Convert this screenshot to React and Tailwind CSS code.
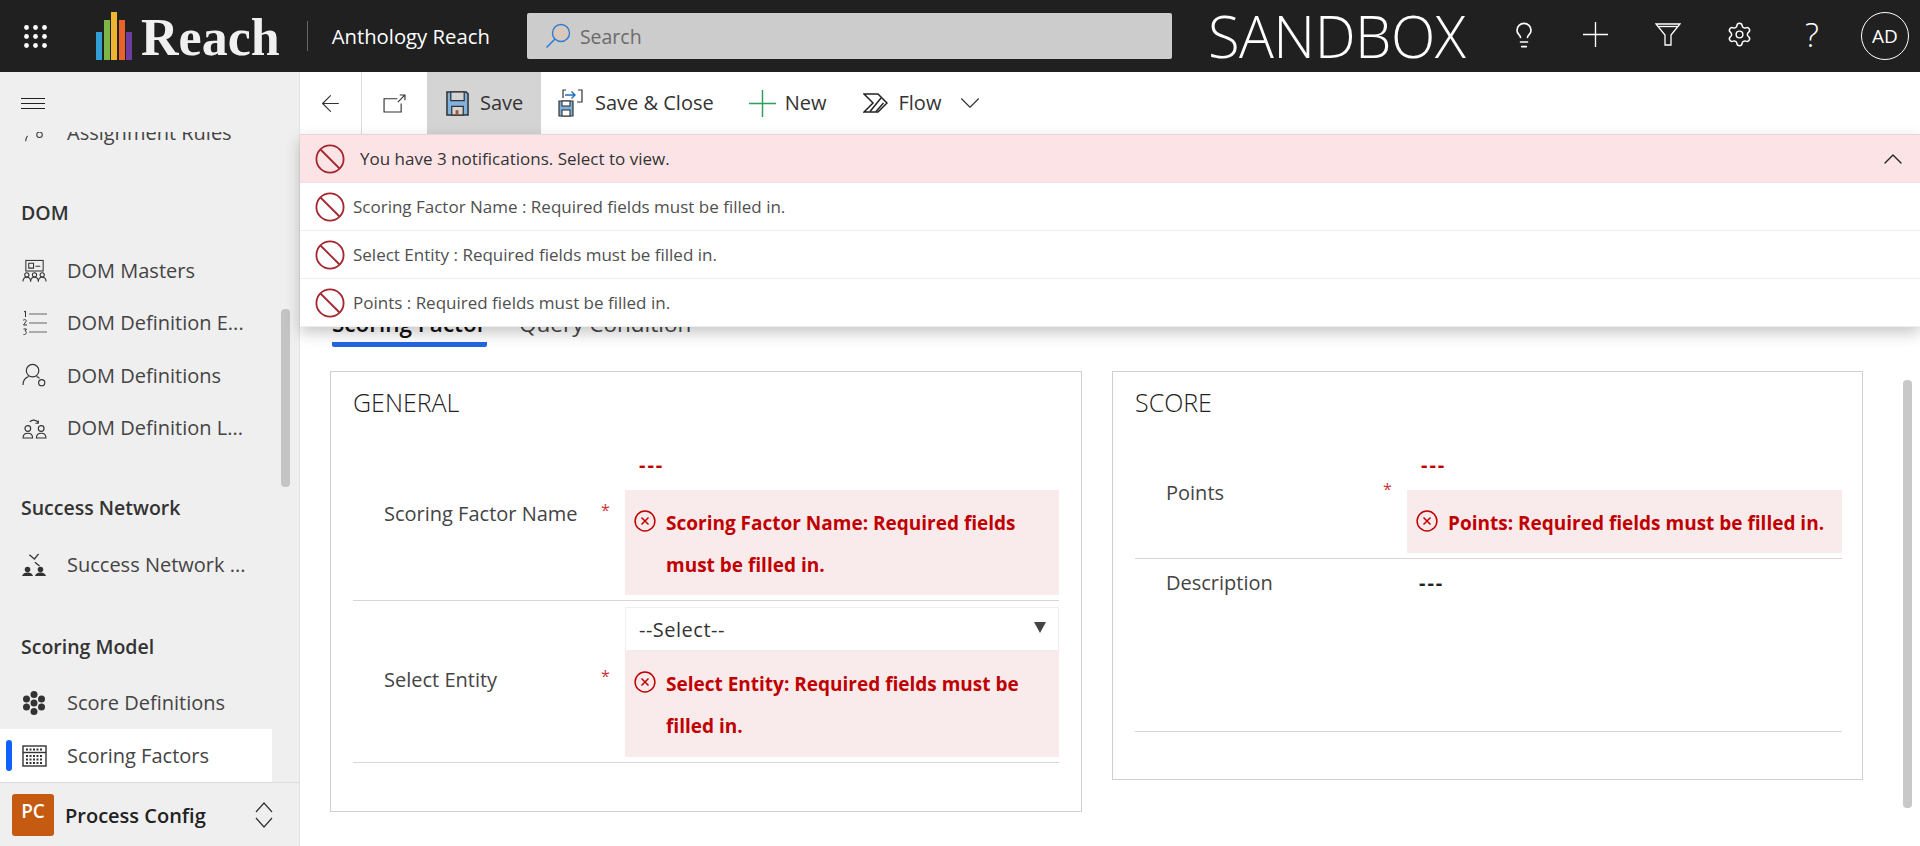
import React from "react";
import { ArrowLeft, ChevronDown, ChevronUp, Lightbulb, Settings } from "lucide-react";

const FONT = "font-['Open_Sans','Noto_Sans',sans-serif]";

const Ban = ({ className = "" }) => (
  <svg viewBox="0 0 30 30" className={`w-[30px] h-[30px] shrink-0 ${className}`} fill="none" stroke="#a4262c" strokeWidth="1.8">
    <circle cx="15" cy="15" r="13.6" />
    <path d="M5.5 5.5 24.5 24.5" />
  </svg>
);

const ErrorIcon = () => (
  <svg viewBox="0 0 22 22" className="w-[22px] h-[22px] shrink-0" fill="none" stroke="#c00000" strokeWidth="1.5">
    <circle cx="11" cy="11" r="9.9" />
    <path d="M7.5 7.5 14.5 14.5M14.5 7.5 7.5 14.5" />
  </svg>
);

const Logo = () => (
  <svg viewBox="0 0 36 48" className="w-[36px] h-[48px] shrink-0">
    <rect x="0" y="20" width="6" height="28" fill="#2f9fd6" />
    <rect x="8" y="8" width="6" height="40" fill="#7cb648" />
    <rect x="15" y="0" width="6" height="48" fill="#f0b530" />
    <rect x="23" y="8" width="6" height="40" fill="#e8622a" />
    <rect x="30" y="20" width="6" height="28" fill="#6a3d9e" />
  </svg>
);

const Waffle = () => (
  <svg viewBox="0 0 23 23" className="w-[23px] h-[23px]" fill="#fff">
    {[2.5, 11.5, 20.5].map((y) =>
      [2.5, 11.5, 20.5].map((x) => <circle key={`${x}-${y}`} cx={x} cy={y} r="2.4" />)
    )}
  </svg>
);

const SearchIcon = () => (
  <svg viewBox="0 0 26 26" className="w-[26px] h-[26px]" fill="none">
    <circle cx="16" cy="10" r="8.5" fill="#d9c9bd" stroke="#2b7cd3" strokeWidth="1.4" />
    <path d="M10 16 1.5 24.5" stroke="#2b7cd3" strokeWidth="1.6" />
  </svg>
);

const FilterIcon = () => (
  <svg viewBox="0 0 26 23" className="w-[26px] h-[23px]" fill="none" stroke="#fff" strokeWidth="1.3">
    <path d="M1 1H25L16 12V22H10V12Z" />
    <path d="M3.5 3.500H22.5" />
  </svg>
);

const PlusIcon = ({ size, color }) => (
  <svg viewBox="0 0 24 24" width={size} height={size} className="shrink-0" fill="none" stroke={color} strokeWidth="1.3">
    <path d="M12 0V24M0 12H24" />
  </svg>
);

const PopoutIcon = () => (
  <svg viewBox="0 0 24 20" className="w-[23px] h-[19px]" fill="none" stroke="#333" strokeWidth="1.2">
    <path d="M15 5H1V19H19V10" />
    <path d="M15.5 8.5 23 1M17.5 1H23V6.5" />
  </svg>
);

const SaveIcon = () => (
  <svg viewBox="0 0 24 26" className="w-[23px] h-[25px]" fill="none">
    <path d="M1 1H21L23 3V25H1Z" fill="#7fb2de" stroke="#333" strokeWidth="1.6" />
    <rect x="5" y="1" width="14" height="9" fill="#d4d4d4" stroke="#333" strokeWidth="1.3" />
    <rect x="6" y="16" width="12" height="9" fill="#d4d4d4" stroke="#333" strokeWidth="1.3" />
    <rect x="10" y="20" width="3" height="5" fill="#a4552c" />
  </svg>
);

const SaveCloseIcon = () => (
  <svg viewBox="0 0 25 28" className="w-[25px] h-[28px]" fill="none">
    <path d="M1 12H15V27H1Z" fill="#7fb2de" stroke="#333" strokeWidth="1.2" />
    <rect x="4" y="12" width="8" height="5" fill="#fff" stroke="#333" strokeWidth="1.1" />
    <rect x="4" y="21" width="8" height="6" fill="#fff" stroke="#333" strokeWidth="1.1" />
    <path d="M5 9V1H8M20 1H24V13H19" stroke="#333" strokeWidth="1.2" />
    <path d="M7 6H17M13.5 2.5 17 6 13.5 9.5" stroke="#1f6fb5" strokeWidth="1.4" />
  </svg>
);

const FlowIcon = () => (
  <svg viewBox="0 0 25 20" className="w-[25px] h-[20px]" fill="none" stroke="#222" strokeWidth="1.5">
    <path d="M1 1H15L24 10 15 19H1L10 10Z" />
    <path d="M7 18.500 18 5M13 18.500 20.500 10" />
  </svg>
);

const ToolButton = ({ icon, label, className = "" }) => (
  <div className={`flex items-center h-full ${className}`}>
    {icon}
    <span className="text-[20px] text-[#333] whitespace-nowrap">{label}</span>
  </div>
);

// sidebar nav icons
const MastersIcon = () => (
  <svg viewBox="0 0 26 24" className="w-[25px] h-[24px]" fill="none" stroke="#333" strokeWidth="1.1">
    <rect x="4" y="1" width="18" height="11" />
    <path d="M7 4h5v5H7ZM14 7h5" />
    {[5, 13, 21].map((x) => (
      <g key={x}>
        <circle cx={x} cy="16" r="2.2" />
        <path d={`M${x - 4} 23c0-3 2-4.5 4-4.5s4 1.500 4 4.500`} />
      </g>
    ))}
  </svg>
);

const NumberedIcon = () => (
  <div className="relative w-[25px] h-[26px]">
    <svg viewBox="0 0 25 26" className="w-[25px] h-[26px]" fill="none" stroke="#666" strokeWidth="1.2">
      <path d="M7 4H25M7 13H25M7 22H25" />
      <path d="M2 2 3.500 1V7M1 10.500C2 9 5 9.500 4 11.500L1.500 15H5M1.500 19H4.500L3 21C5 21 5 25 1.500 24.500" stroke="#333" strokeWidth="1" />
    </svg>
  </div>
);

const UserGearIcon = () => (
  <svg viewBox="0 0 26 26" className="w-[25px] h-[25px]" fill="none" stroke="#333" strokeWidth="1.2">
    <circle cx="11" cy="8" r="6.500" />
    <path d="M1 23c0-5 3-8 6-9M15 14c1.500.5 2.500 1.200 3.200 2" />
    <circle cx="20.500" cy="20.500" r="3.200" />
  </svg>
);

const UsersSwapIcon = () => (
  <svg viewBox="0 0 26 22" className="w-[25px] h-[21px]" fill="none" stroke="#333" strokeWidth="1.2">
    <circle cx="6" cy="11" r="3" />
    <path d="M1 21c0-3 2-5 5-5s5 2 5 5Z" />
    <circle cx="20" cy="11" r="3" />
    <path d="M15 21c0-3 2-5 5-5s5 2 5 5Z" />
    <path d="M8 4C11 1 15 2 17 5M17 2.500V5.500H14" />
  </svg>
);

const NetworkIcon = () => (
  <svg viewBox="0 0 26 26" className="w-[24px] h-[24px]">
    <path d="M8 2 14 7M18 1 13 7M14 10l5 4" fill="none" stroke="#333" strokeWidth="1.4" />
    <circle cx="6" cy="18" r="3" fill="#333" />
    <path d="M0 25c1-3 3-4 6-4s5 1 6 4Z" fill="#333" />
    <circle cx="20" cy="18" r="3" fill="#333" />
    <path d="M14 25c1-3 3-4 6-4s5 1 6 4Z" fill="#333" />
  </svg>
);

const FlowerIcon = () => (
  <svg viewBox="0 0 24 24" className="w-[24px] h-[24px]" fill="#333">
    {[[12, 3.5], [4.500, 8], [19.500, 8], [12, 12], [4.500, 16], [19.500, 16], [12, 20.500]].map(([x, y]) => (
      <circle key={`${x}-${y}`} cx={x} cy={y} r="3.500" />
    ))}
  </svg>
);

const AbacusIcon = () => (
  <svg viewBox="0 0 25 22" className="w-[25px] h-[22px]" fill="none" stroke="#333" strokeWidth="1.4">
    <rect x="1" y="1" width="23" height="20" />
    <path d="M1 7.500H24" />
    <path d="M4 4.500H21M4 11H21M4 14.500H21M4 18H21" strokeDasharray="2 1.500" strokeWidth="1.800" />
  </svg>
);

const UpDownIcon = () => (
  <svg viewBox="0 0 18 26" className="w-[18px] h-[26px]" fill="none" stroke="#333" strokeWidth="1.2">
    <path d="M1 10 9 1 17 10M1 16 9 25 17 16" />
  </svg>
);

const SectionTitle = ({ children, className = "" }) => (
  <div className={`pl-[21px] text-[19.500px] font-semibold text-[#333] leading-[26px] ${className}`}>{children}</div>
);

const NavItem = ({ icon, label, active }) => (
  <div className={`relative flex items-center h-[52.500px] w-[272px] ${active ? "bg-white pt-[2px]" : ""}`}>
    {active && <span className="absolute left-[6px] top-[11px] w-[6px] h-[31px] rounded-[3px] bg-[#0f62fe]" />}
    <span className="w-[67px] pl-[22px] flex items-center shrink-0">{icon}</span>
    <span className="text-[20px] text-[#444] whitespace-nowrap">{label}</span>
  </div>
);

const Sidebar = () => (
  <aside className="w-[300px] shrink-0 bg-[#efefef] border-r border-[#e2e2e2] flex flex-col relative">
    <div className="h-[60px] shrink-0 pl-[21px] pt-[26px]">
      <div className="w-[24px] flex flex-col gap-[4px]">
        <span className="h-px bg-[#222]" />
        <span className="h-px bg-[#222]" />
        <span className="h-px bg-[#222]" />
      </div>
    </div>
    <div className="flex-1 overflow-hidden relative">
      <div className="mt-[-25px]">
        <NavItem
          label="Assignment Rules"
          icon={
            <svg viewBox="0 0 26 24" className="w-[24px] h-[24px]" fill="none" stroke="#333" strokeWidth="1.1">
              <circle cx="19" cy="14" r="3" />
              <path d="M4 21c0-3 1-5 2-6" />
            </svg>
          }
        />
        <SectionTitle className="mt-[40px]">DOM</SectionTitle>
        <div className="mt-[19px]">
          <NavItem icon={<MastersIcon />} label="DOM Masters" />
          <NavItem icon={<NumberedIcon />} label="DOM Definition E..." />
          <NavItem icon={<UserGearIcon />} label="DOM Definitions" />
          <NavItem icon={<UsersSwapIcon />} label="DOM Definition L..." />
        </div>
        <SectionTitle className="mt-[40px]">Success Network</SectionTitle>
        <div className="mt-[18px]">
          <NavItem icon={<NetworkIcon />} label="Success Network ..." />
        </div>
        <SectionTitle className="mt-[42.500px]">Scoring Model</SectionTitle>
        <div className="mt-[17px]">
          <NavItem icon={<FlowerIcon />} label="Score Definitions" />
          <NavItem icon={<AbacusIcon />} label="Scoring Factors" active />
        </div>
      </div>
      <span className="absolute left-[281px] top-[177px] w-[9px] h-[178px] rounded-[4px] bg-[#c4c4c4]" />
    </div>
    <div className="h-[64px] shrink-0 border-t border-[#dcdcdc] flex items-center pl-[12px]">
      <div className="w-[42px] h-[42px] rounded-[3px] bg-[#c55a11] text-white text-[19px] font-semibold flex items-center justify-center pb-[6px]">
        PC
      </div>
      <span className="ml-[11px] pt-[2px] text-[20px] font-semibold text-[#222]">Process Config</span>
      <span className="ml-auto mr-[26px] flex">
        <UpDownIcon />
      </span>
    </div>
  </aside>
);

const ErrorBox = ({ lines, className = "" }) => (
  <div className={`bg-[#f9ebeb] flex pl-[9px] pr-[12px] text-[19px] font-bold text-[#c00000] leading-[42px] ${className}`}>
    <span className="w-[32px] shrink-0 pt-[8px]">
      <ErrorIcon />
    </span>
    <span className="whitespace-nowrap">
      {lines.map((line) => (
        <div key={line}>{line}</div>
      ))}
    </span>
  </div>
);

const LabelCol = ({ label, required, className = "" }) => (
  <div className={`w-[272px] shrink-0 relative pl-[31px] text-[20px] text-[#444] ${className}`}>
    {label}
    {required && <span className="absolute left-[248px] top-[-1px] text-[#d13438] text-[16px]">*</span>}
  </div>
);

const Dashes = ({ className = "" }) => (
  <span className={`font-bold text-[20px] tracking-[2px] ${className}`}>---</span>
);

const Card = ({ title, className = "", children }) => (
  <section className={`border border-[#cfcfcf] pl-[22px] pt-[15px] ${className}`}>
    <h2 className="text-[25px] leading-[30px] font-light text-[#222] mb-[11px]">{title}</h2>
    {children}
  </section>
);

const Notice = ({ text }) => (
  <div className="h-[48px] flex items-center pl-[15px] border-b border-[#eeeeee] bg-white text-[17px] text-[#505050]">
    <Ban />
    <span className="ml-[8px]">{text}</span>
  </div>
);

export default function App() {
  return (
    <div className={`w-[1920px] h-[846px] overflow-hidden flex flex-col bg-white ${FONT}`}>
      <header className="h-[72px] shrink-0 bg-[#202020] flex items-center text-white">
        <div className="ml-[24px] flex">
          <Waffle />
        </div>
        <div className="ml-[49px] flex items-center">
          <Logo />
          <span className="ml-[9px] pt-[3px] font-['Liberation_Serif',serif] font-bold text-[52px] leading-[60px] text-[#f0f0f0]">Reach</span>
        </div>
        <span className="ml-[27px] w-px h-[30px] bg-[#666]" />
        <span className="ml-[24px] text-[20.300px] whitespace-nowrap">Anthology Reach</span>
        <div className="ml-[37px] w-[645px] h-[46px] rounded-[2px] bg-[#cccccc] flex items-center pl-[18px]">
          <SearchIcon />
          <span className="ml-[9px] text-[19.500px] text-[#6b6b6b] pt-[1px]">Search</span>
        </div>
        <span className="ml-[36px] text-[58px] font-light leading-[70px] tracking-[-0.5px] w-[270px] whitespace-nowrap">SANDBOX</span>
        <div className="ml-[28px] mb-[3px] w-[36px] flex justify-center">
          <Lightbulb size={28} strokeWidth={1.4} />
        </div>
        <div className="ml-[36px] mb-[3px] w-[36px] flex justify-center">
          <PlusIcon size={25} color="#fff" />
        </div>
        <div className="ml-[36px] mb-[3px] w-[36px] flex justify-center">
          <FilterIcon />
        </div>
        <div className="ml-[36px] mb-[3px] w-[36px] flex justify-center">
          <Settings size={27} strokeWidth={1.3} />
        </div>
        <div className="ml-[36px] mb-[3px] w-[36px] text-center text-[33px] font-light leading-none">?</div>
        <div className="ml-[31px] w-[48px] h-[48px] rounded-full border border-white flex items-center justify-center text-[19px]">AD</div>
      </header>

      <div className="flex-1 flex min-h-0">
        <Sidebar />
        <main className="flex-1 relative min-w-0">
          <div className="h-[62px] flex items-center">
            <div className="w-[62px] h-full border-r border-[#dcdcdc] flex items-center justify-center">
              <ArrowLeft size={27} strokeWidth={1} color="#333" />
            </div>
            <div className="w-[65px] h-full flex items-center justify-center">
              <PopoutIcon />
            </div>
            <ToolButton className="w-[114px] bg-[#d4d4d4] pl-[19px] gap-[11px]" icon={<SaveIcon />} label="Save" />
            <ToolButton className="ml-[17px] gap-[12px]" icon={<SaveCloseIcon />} label="Save & Close" />
            <ToolButton className="ml-[35px] gap-[9px]" icon={<PlusIcon size={27} color="#2e9e5b" />} label="New" />
            <ToolButton className="ml-[36px] gap-[11px]" icon={<FlowIcon />} label="Flow" />
            <ChevronDown size={34} strokeWidth={0.8} color="#333" className="ml-[12px]" />
          </div>

          <div className="pt-[176px]">
            <div className="flex pl-[32px] text-[22.500px] leading-[28px]">
              <span className="w-[155px] font-semibold text-[#111] border-b-[5px] border-[#2266e3] pb-[4px] rounded-b-[2px] whitespace-nowrap">Scoring Factor</span>
              <span className="ml-[32px] text-[#444] whitespace-nowrap">Query Condition</span>
            </div>
            <div className="flex items-start pl-[30px] mt-[24px]">
              <Card title="GENERAL" className="w-[752px] h-[441px] pr-[22px]">
                <div className="flex items-center border-b border-[#d6d6d6]">
                  <LabelCol label="Scoring Factor Name" required />
                  <div className="flex-1 pb-[5px]">
                    <div className="h-[62px] pl-[14px] pt-[21px] text-[#c00000] leading-[32px]"><Dashes /></div>
                    <ErrorBox className="h-[105px] pt-[12px]" lines={["Scoring Factor Name: Required fields", "must be filled in."]} />
                  </div>
                </div>
                <div className="flex items-center border-b border-[#d6d6d6]">
                  <LabelCol label="Select Entity" required className="mb-[4px]" />
                  <div className="flex-1 pt-[6px] pb-[5px]">
                    <div className="h-[44px] border border-[#eeeeee] pl-[13px] pr-[12px] pt-[2px] flex items-center justify-between text-[20px] tracking-[0.5px] text-[#333]">
                      --Select--
                      <span className="w-0 h-0 border-x-[6px] border-x-transparent border-t-[11px] border-t-[#444] mb-[5px]" />
                    </div>
                    <ErrorBox className="h-[106px] pt-[12px]" lines={["Select Entity: Required fields must be", "filled in."]} />
                  </div>
                </div>
              </Card>
              <Card title="SCORE" className="ml-[30px] w-[751px] h-[409px] pr-[20px]">
                <div className="flex items-center border-b border-[#d6d6d6]">
                  <LabelCol label="Points" required />
                  <div className="flex-1 pb-[5px]">
                    <div className="h-[62px] pl-[14px] pt-[21px] text-[#c00000] leading-[32px]"><Dashes /></div>
                    <ErrorBox className="h-[63px] pt-[12px]" lines={["Points: Required fields must be filled in."]} />
                  </div>
                </div>
                <div className="flex h-[173px] border-b border-[#d6d6d6] pt-[11px] leading-[26px]">
                  <LabelCol label="Description" />
                  <span className="pl-[12px] text-[#222]"><Dashes /></span>
                </div>
              </Card>
            </div>
          </div>

          <span className="absolute right-[8px] top-[308px] w-[9px] h-[428px] rounded-[4px] bg-[#c8c8c8]" />

          <div className="absolute left-0 right-0 top-[62px] shadow-[0_6px_14px_rgba(0,0,0,0.22)]">
            <div className="h-[49px] bg-[#fce4e6] border-t border-[#e6d6d8] border-b border-b-[#efdfe0] flex items-center pl-[15px] text-[17px] text-[#333]">
              <Ban />
              <span className="ml-[15px]">You have 3 notifications. Select to view.</span>
              <ChevronUp size={32} strokeWidth={1} color="#222" className="ml-auto mr-[11px]" />
            </div>
            <Notice text="Scoring Factor Name : Required fields must be filled in." />
            <Notice text="Select Entity : Required fields must be filled in." />
            <Notice text="Points : Required fields must be filled in." />
          </div>
        </main>
      </div>
    </div>
  );
}
